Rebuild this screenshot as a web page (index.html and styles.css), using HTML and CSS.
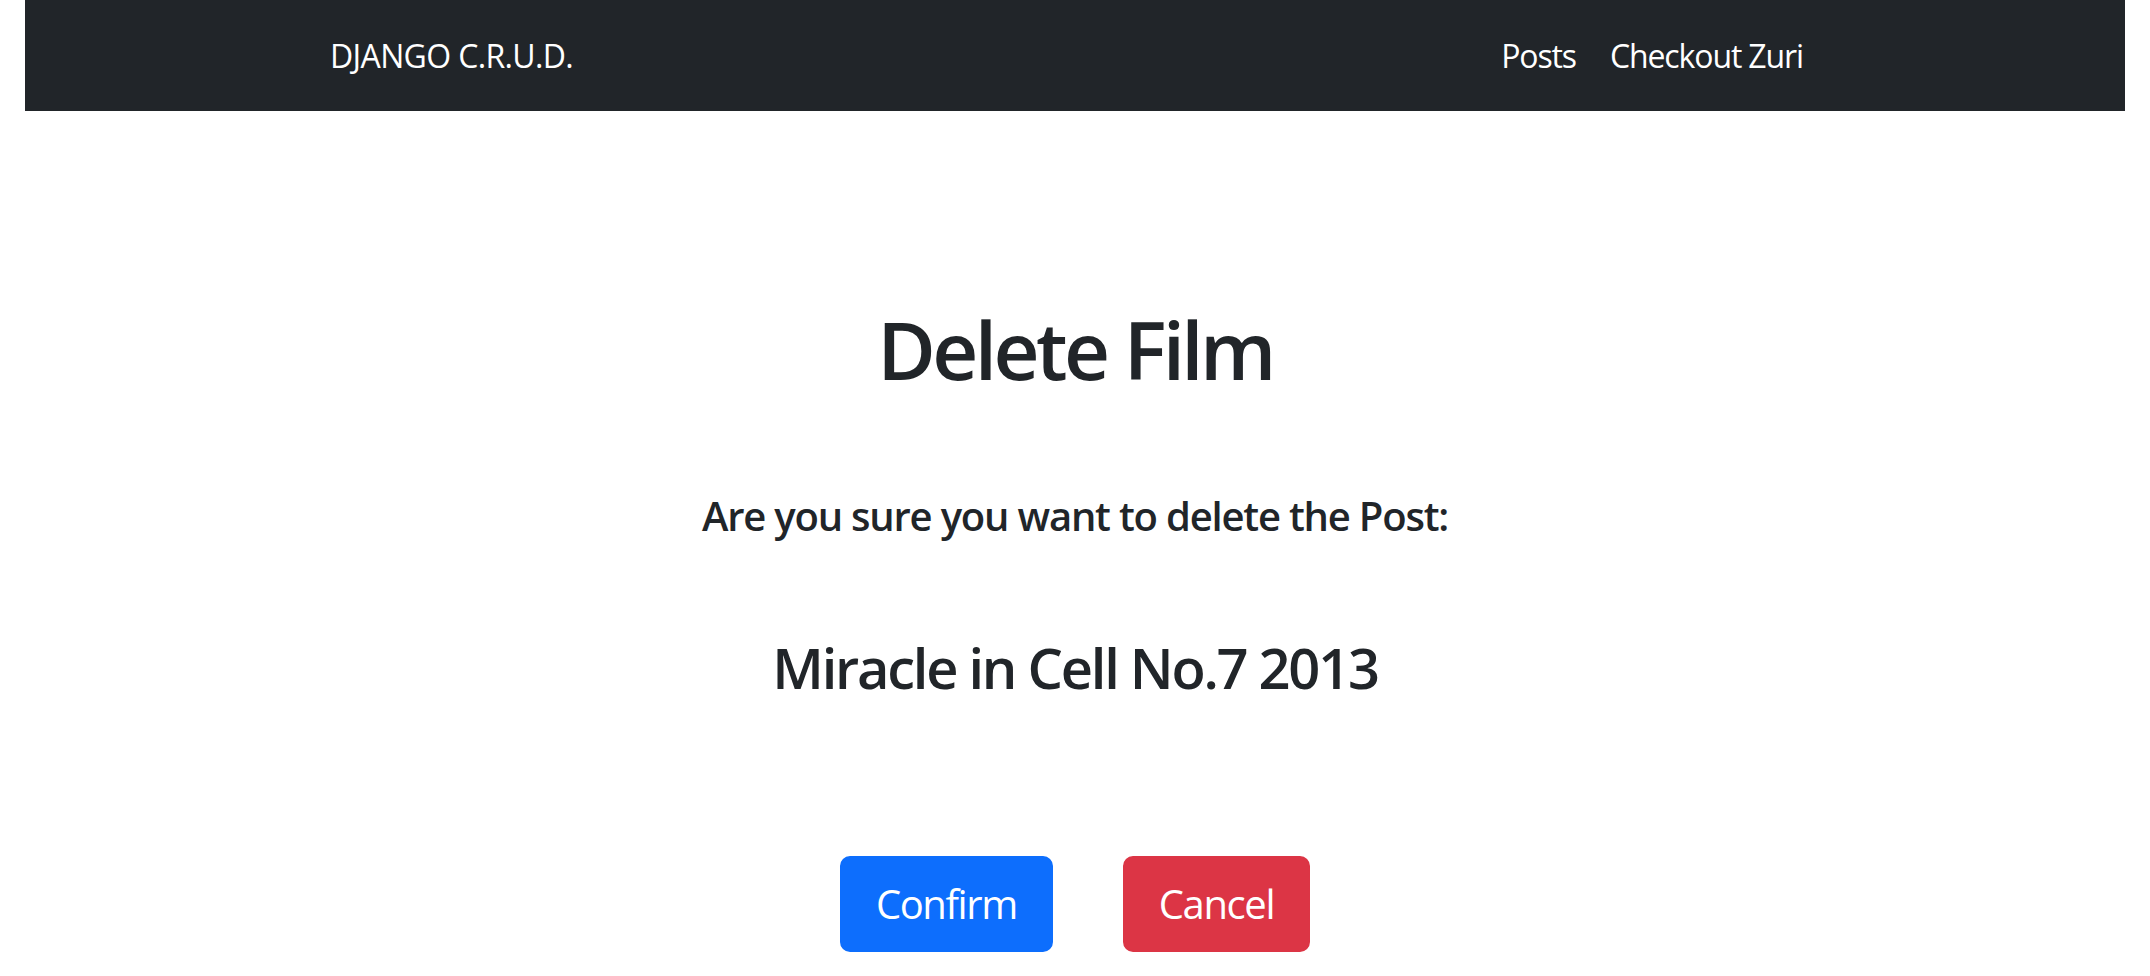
FILE: index.html
```html
<!DOCTYPE html>
<html lang="en">
<head>
<meta charset="utf-8">
<title>Delete Film</title>
<link rel="stylesheet" href="styles.css">
</head>
<body>
<nav class="navbar">
  <a class="brand" href="#">DJANGO C.R.U.D.</a>
  <ul class="nav-links">
    <li><a href="#">Posts</a></li>
    <li><a href="#">Checkout Zuri</a></li>
  </ul>
</nav>
<main class="content">
  <h1 class="title">Delete Film</h1>
  <h5 class="question">Are you sure you want to delete the Post:</h5>
  <h3 class="film">Miracle in Cell No.7 2013</h3>
  <form class="actions">
    <button type="button" class="btn btn-primary">Confirm</button>
    <button type="button" class="btn btn-danger">Cancel</button>
  </form>
</main>
</body>
</html>
```
FILE: styles.css
```css
* { box-sizing: border-box; }
html, body {
  margin: 0;
  padding: 0;
  background: #fff;
}
body {
  font-family: "Open Sans", "Noto Sans", sans-serif;
  color: #212529;
}
a { text-decoration: none; }

.navbar {
  margin: 0 25px;
  height: 111px;
  background: #212529;
  display: flex;
  align-items: center;
  justify-content: space-between;
  padding: 0 322px 0 305px;
}
.brand {
  color: #fff;
  font-size: 32px;
  line-height: 1.5;
  letter-spacing: -0.02em;
}
.nav-links {
  list-style: none;
  margin: 0;
  padding: 0;
  display: flex;
  gap: 34px;
}
.nav-links a {
  color: #fff;
  font-size: 32px;
  line-height: 1.5;
  letter-spacing: -0.035em;
}

.content {
  text-align: center;
}
.title {
  margin: 190px 0 0;
  font-size: 80px;
  font-weight: 600;
  line-height: 1.2;
  letter-spacing: -0.045em;
}
.question {
  margin: 95px 0 0;
  font-size: 40px;
  font-weight: 600;
  line-height: 1.2;
  letter-spacing: -0.03em;
}
.film {
  margin: 94px 0 0;
  font-size: 56px;
  font-weight: 600;
  line-height: 1.2;
  letter-spacing: -0.04em;
}
.actions {
  margin: 155px 0 0;
  display: flex;
  justify-content: center;
  gap: 70px;
}
.btn {
  font-family: inherit;
  font-size: 40px;
  line-height: 1.5;
  padding: 16px 34px;
  border: 2px solid transparent;
  border-radius: 10px;
  color: #fff;
  letter-spacing: -0.035em;
  cursor: pointer;
}
.btn-primary {
  background: #0d6efd;
  border-color: #0d6efd;
}
.btn-danger {
  background: #dc3545;
  border-color: #dc3545;
}
```
